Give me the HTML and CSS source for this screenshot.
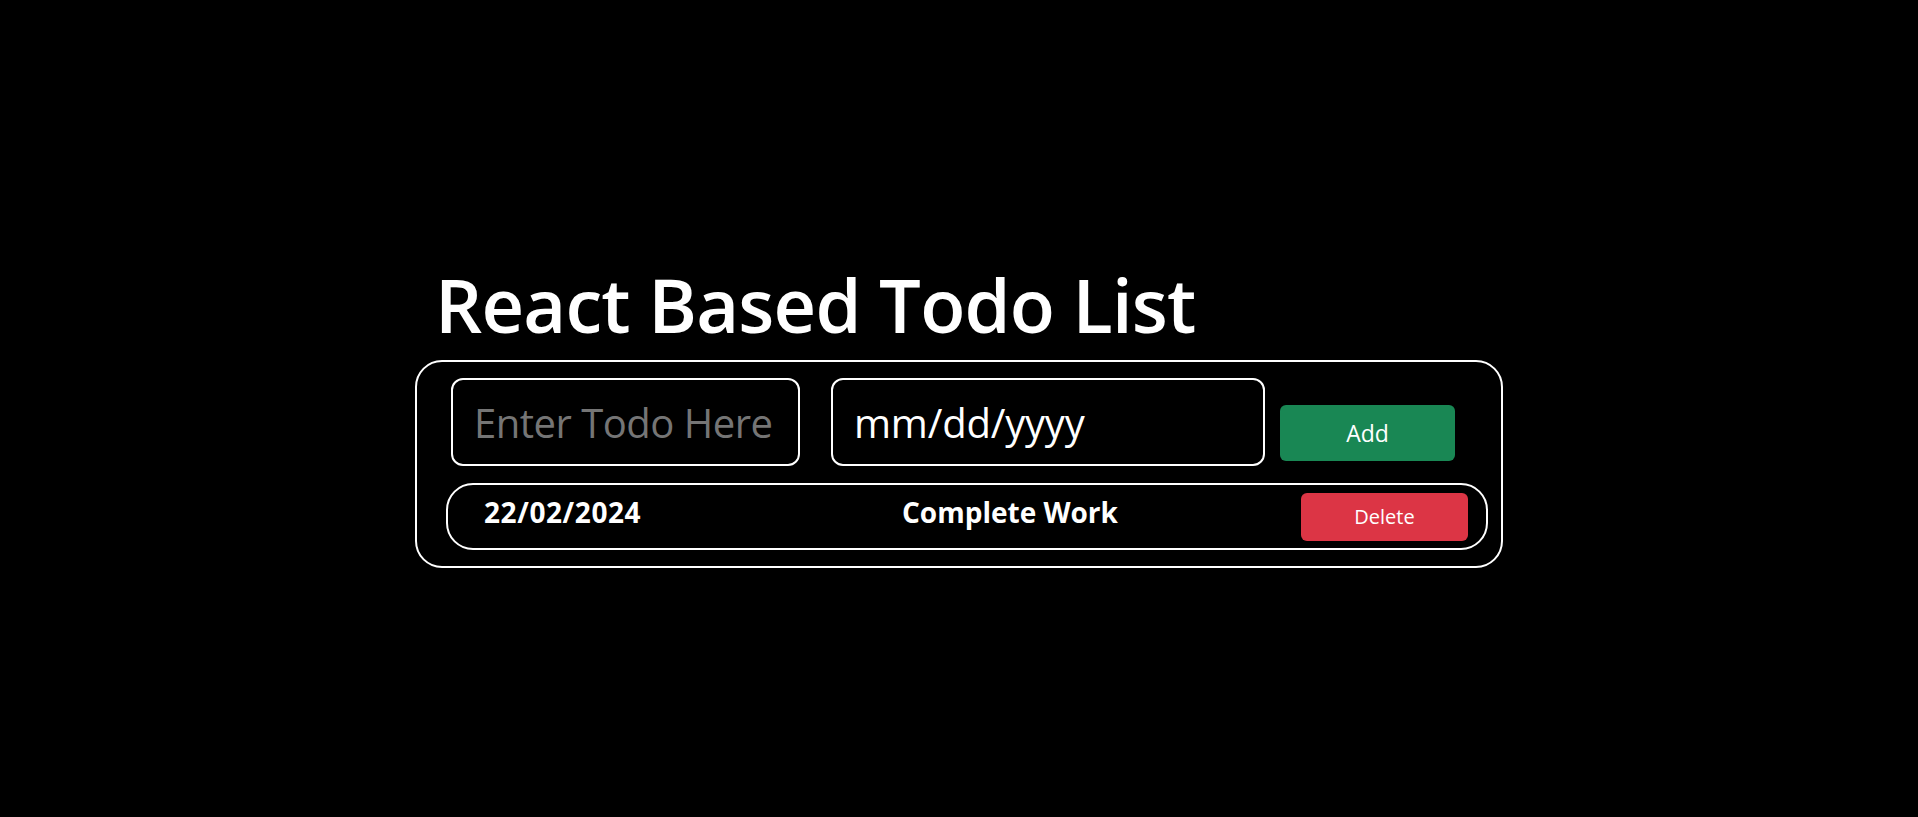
FILE: index.html
```html
<!DOCTYPE html>
<html lang="en">
<head>
<meta charset="utf-8">
<title>React Based Todo List</title>
<link rel="stylesheet" href="styles.css">
</head>
<body>
<main class="app">
  <h1 class="title">React Based Todo List</h1>
  <section class="todo-box">
    <div class="add-row">
      <input class="field field-name" type="text" placeholder="Enter Todo Here">
      <input class="field field-date" type="text" value="mm/dd/yyyy" readonly>
      <button class="btn btn-add" type="button">Add</button>
    </div>
    <div class="item-row">
      <span class="item-date">22/02/2024</span>
      <span class="item-name">Complete Work</span>
      <button class="btn btn-delete" type="button">Delete</button>
    </div>
  </section>
</main>
</body>
</html>
```
FILE: styles.css
```css
html, body {
  margin: 0;
  padding: 0;
  background: #000;
  color: #fff;
  font-family: "Open Sans", "Noto Sans", sans-serif;
}

.app {
  width: 1088px;
  margin: 0 auto;
  padding-top: 259px;
}

.title {
  margin: 0 0 10px 20px;
  font-size: 74px;
  line-height: 91px;
  font-weight: 600;
  letter-spacing: -0.8px;
}

.todo-box {
  box-sizing: border-box;
  height: 208px;
  border: 2px solid #fff;
  border-radius: 27px;
  padding: 16px 13px 16px 29px;
  display: flex;
  flex-direction: column;
  gap: 17px;
}

.add-row {
  display: flex;
  align-items: flex-start;
  padding-left: 5px;
  height: 88px;
}

.field {
  box-sizing: border-box;
  height: 88px;
  background: #000;
  color: #fff;
  border: 2px solid #fff;
  border-radius: 12px;
  padding: 0 0 0 21px;
  font-family: "Open Sans", "Noto Sans", sans-serif;
  font-size: 40px;
  letter-spacing: -0.2px;
  outline: none;
}

.field::placeholder {
  color: #757575;
}

.field-name {
  width: 349px;
  letter-spacing: -0.5px;
}

.field-date {
  width: 434px;
  margin-left: 31px;
}

.btn {
  box-sizing: border-box;
  border: none;
  color: #fff;
  font-family: "Open Sans", "Noto Sans", sans-serif;
  padding: 0;
  border-radius: 6px;
}

.btn-add {
  width: 175px;
  height: 56px;
  margin: 27px 0 0 15px;
  background: #198754;
  font-size: 23px;
}

.item-row {
  box-sizing: border-box;
  height: 67px;
  border: 2px solid #fff;
  border-radius: 27px;
  display: flex;
  align-items: center;
  padding: 0 18px 0 36px;
}

.item-date,
.item-name {
  font-size: 28px;
  font-weight: 700;
  margin-bottom: 9px;
}

.item-date {
  width: 418px;
  letter-spacing: 0.6px;
}

.item-name {
  flex: 1;
}

.btn-delete {
  width: 167px;
  height: 48px;
  background: #dc3545;
  font-size: 20px;
}
```
